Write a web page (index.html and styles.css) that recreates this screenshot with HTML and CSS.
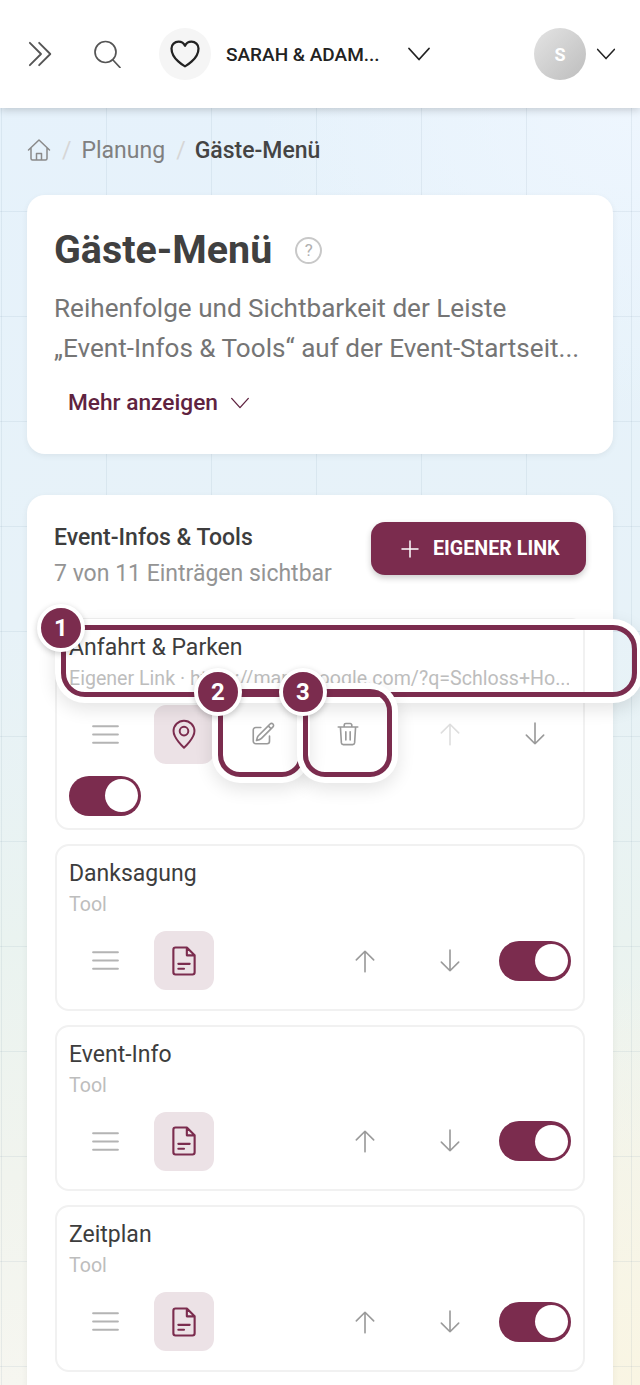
FILE: index.html
```html
<!DOCTYPE html>
<html lang="de">
<head>
  <meta charset="utf-8">
  <title>Gäste-Menü</title>
  <meta name="viewport" content="width=device-width, initial-scale=1">
  <link rel="stylesheet" href="styles.css">
</head>
<body>
  <svg class="sprite" width="0" height="0">
    <symbol id="i-menu" viewBox="0 0 24 24"><path d="M3 6h18M3 12h18M3 18h18"/></symbol>
    <symbol id="i-doc" viewBox="0 0 24 24"><path d="M14 2.5H6A1.500 1.500 0 0 0 4.500 4v16A1.500 1.500 0 0 0 6 21.500h12a1.500 1.500 0 0 0 1.500-1.500V8L14 2.500ZM14 2.500V8h5.500M8 14h8M8 17.500h4"/></symbol>
    <symbol id="i-up" viewBox="0 0 24 24"><path d="M12 22V3M4 11l8-8 8 8"/></symbol>
    <symbol id="i-down" viewBox="0 0 24 24"><path d="M12 2v19M4 13l8 8 8-8"/></symbol>
    <symbol id="i-chevron" viewBox="0 0 24 24"><path d="M2 6.500l10 11 10-11"/></symbol>
  </svg>

  <header class="topbar">
    <svg class="icon nav-toggle" viewBox="0 0 28 28"><path d="M2 2l12 12L2 26M12 2l12 12-12 12"/></svg>
    <svg class="icon nav-search" viewBox="0 0 28 28"><circle cx="12.500" cy="12" r="10.500"/><path d="M20 20l7 7.500"/></svg>
    <span class="event-badge">
      <svg class="icon" viewBox="0 0 24 24"><path d="M21 8.250c0-2.485-2.099-4.500-4.688-4.500-1.935 0-3.597 1.126-4.312 2.733-.715-1.607-2.377-2.733-4.313-2.733C5.100 3.750 3 5.765 3 8.250c0 7.220 9 12 9 12s9-4.780 9-12Z"/></svg>
    </span>
    <span class="event-name">SARAH &amp; ADAM...</span>
    <svg class="icon chevron-event"><use href="#i-chevron"/></svg>
    <span class="avatar">S</span>
    <svg class="icon chevron-user"><use href="#i-chevron"/></svg>
  </header>

  <main class="page">
    <nav class="crumbs">
      <svg class="icon crumb-home" viewBox="0 0 24 24"><path d="M1.500 12 12 2l10.500 10M4 9.500v11A1.500 1.500 0 0 0 5.500 22h13a1.500 1.500 0 0 0 1.500-1.500v-11M9.500 22v-6.500h5V22"/></svg>
      <span class="crumb-sep">/</span>
      <span>Planung</span>
      <span class="crumb-sep">/</span>
      <strong>Gäste-Menü</strong>
    </nav>

    <section class="card intro">
      <div class="intro-head">
        <h1>Gäste-Menü</h1>
        <span class="help">?</span>
      </div>
      <p class="intro-text">Reihenfolge und Sichtbarkeit der Leiste<br>„Event-Infos &amp; Tools“ auf der Event-Startseit...</p>
      <div class="more">
        Mehr anzeigen
        <svg class="icon"><use href="#i-chevron"/></svg>
      </div>
    </section>

    <section class="card tools">
      <div class="tools-head">
        <div>
          <h2>Event-Infos &amp; Tools</h2>
          <p>7 von 11 Einträgen sichtbar</p>
        </div>
        <button class="add-link">
          <svg class="icon" viewBox="0 0 18 18"><path d="M9 1v16M1 9h16"/></svg>
          EIGENER LINK
        </button>
      </div>

      <article class="item">
        <h3>Anfahrt &amp; Parken</h3>
        <p class="item-sub">Eigener Link · https://maps.google.com/?q=Schloss+Ho...</p>
        <div class="controls controls-wrap">
          <span class="handle"><svg class="icon"><use href="#i-menu"/></svg></span>
          <span class="tile">
            <svg class="icon" viewBox="-1 -1 26 26"><path d="M12 22.500S4 15.500 4 9.800a8 8 0 0 1 16 0c0 5.700-8 12.700-8 12.700Z"/><circle cx="12" cy="9.800" r="3.300"/></svg>
          </span>
          <span class="act">
            <svg class="icon" viewBox="0 0 24 24"><path d="m16.862 4.487 1.687-1.688a1.875 1.875 0 1 1 2.652 2.652L10.582 16.070a4.500 4.500 0 0 1-1.897 1.130L6 18l.8-2.685a4.500 4.500 0 0 1 1.130-1.897l8.932-8.931ZM16.862 4.487 19.500 7.125M18 14v4.750A2.250 2.250 0 0 1 15.750 21H5.250A2.250 2.250 0 0 1 3 18.750V8.250A2.250 2.250 0 0 1 5.250 6H10"/></svg>
          </span>
          <span class="act">
            <svg class="icon" viewBox="0 0 24 24"><path d="M3 5.500h18M8.500 5.500V3.800A1.500 1.500 0 0 1 10 2.300h4a1.500 1.500 0 0 1 1.500 1.500v1.700M5 5.500l.9 14.700a1.800 1.800 0 0 0 1.800 1.600h8.600a1.800 1.800 0 0 0 1.800-1.600L19 5.500M10 10v7.500M14 10v7.500"/></svg>
          </span>
          <span class="moves">
            <span class="act act-off"><svg class="icon"><use href="#i-up"/></svg></span>
            <span class="act"><svg class="icon"><use href="#i-down"/></svg></span>
          </span>
          <span class="toggle"></span>
        </div>
        <!-- callouts -->
        <span class="mark mark-row"></span>
        <span class="mark mark-edit"></span>
        <span class="mark mark-trash"></span>
        <span class="pin pin-1">1</span>
        <span class="pin pin-2">2</span>
        <span class="pin pin-3">3</span>
      </article>

      <article class="item">
        <h3>Danksagung</h3>
        <p class="item-sub">Tool</p>
        <div class="controls">
          <span class="handle"><svg class="icon"><use href="#i-menu"/></svg></span>
          <span class="tile"><svg class="icon"><use href="#i-doc"/></svg></span>
          <span class="moves">
            <span class="act"><svg class="icon"><use href="#i-up"/></svg></span>
            <span class="act"><svg class="icon"><use href="#i-down"/></svg></span>
          </span>
          <span class="toggle"></span>
        </div>
      </article>

      <article class="item">
        <h3>Event-Info</h3>
        <p class="item-sub">Tool</p>
        <div class="controls">
          <span class="handle"><svg class="icon"><use href="#i-menu"/></svg></span>
          <span class="tile"><svg class="icon"><use href="#i-doc"/></svg></span>
          <span class="moves">
            <span class="act"><svg class="icon"><use href="#i-up"/></svg></span>
            <span class="act"><svg class="icon"><use href="#i-down"/></svg></span>
          </span>
          <span class="toggle"></span>
        </div>
      </article>

      <article class="item">
        <h3>Zeitplan</h3>
        <p class="item-sub">Tool</p>
        <div class="controls">
          <span class="handle"><svg class="icon"><use href="#i-menu"/></svg></span>
          <span class="tile"><svg class="icon"><use href="#i-doc"/></svg></span>
          <span class="moves">
            <span class="act"><svg class="icon"><use href="#i-up"/></svg></span>
            <span class="act"><svg class="icon"><use href="#i-down"/></svg></span>
          </span>
          <span class="toggle"></span>
        </div>
      </article>
    </section>
  </main>
</body>
</html>
```

FILE: styles.css
```css
*, *:before, *:after {
  box-sizing: border-box;
}
html, body {
  margin: 0;
  padding: 0;
  height: 100%;
  overflow: hidden;
}
body {
  font-family: Roboto, "Liberation Sans", sans-serif;
  color: #3d3d3d;
  background:
    radial-gradient(ellipse 75% 30% at 100% 100%, #f9f5e3, #f9f5e300),
    radial-gradient(ellipse 60% 22% at 100% 8%, #eef6fe, #eef6fe00),
    linear-gradient(180deg, #e6f2fc 0, #e7f2f8 45%, #eaf3f0 68%, #f1f4ee 85%, #f6f6f0 100%);
}
h1, h2, h3, p {
  margin: 0;
}
.sprite {
  position: absolute;
}
.icon {
  display: block;
  fill: none;
  stroke: currentColor;
  stroke-width: 1.5;
  stroke-linecap: round;
  stroke-linejoin: round;
}

/* top bar */
.topbar {
  position: relative;
  z-index: 2;
  display: flex;
  align-items: center;
  height: 108px;
  padding: 0 24px 0 28px;
  background: #fff;
  box-shadow: 0 2px 8px #0000002e;
}
.nav-toggle {
  width: 26px;
  height: 26px;
  color: #555;
  stroke-width: 2;
}
.nav-search {
  width: 28px;
  height: 28px;
  margin-left: 39px;
  color: #555;
  stroke-width: 1.7;
}
.event-badge {
  display: flex;
  align-items: center;
  justify-content: center;
  width: 52px;
  height: 52px;
  margin-left: 38px;
  border-radius: 50%;
  background: #f5f5f5;
  color: #222;
}
.event-badge .icon {
  width: 36px;
  height: 36px;
}
.event-name {
  width: 170px;
  margin-left: 15px;
  font-size: 19px;
  font-weight: 500;
  color: #222;
  white-space: nowrap;
}
.chevron-event {
  width: 24px;
  height: 24px;
  margin-left: 11px;
  color: #222;
  stroke-width: 1.8;
}
.avatar {
  display: flex;
  align-items: center;
  justify-content: center;
  width: 52px;
  height: 52px;
  margin-left: auto;
  border-radius: 50%;
  background: linear-gradient(135deg, #e4e4e4, #bdbdbd);
  color: #fff;
  font-size: 18px;
  font-weight: 700;
}
.chevron-user {
  width: 20px;
  height: 20px;
  margin-left: 10px;
  color: #222;
  stroke-width: 1.8;
}

/* page */
.page {
  height: 1277px;
  overflow: hidden;
  padding: 0 27px;
  background-image:
    linear-gradient(90deg, #7896aa20 1px, transparent 1px),
    linear-gradient(180deg, #7896aa20 1px, transparent 1px);
  background-size: 105px 105px;
  background-position: 1px -2px;
}
.crumbs {
  display: flex;
  align-items: center;
  height: 84px;
  font-size: 23px;
  color: #808080;
}
.crumbs strong {
  margin-left: -1px;
  font-size: 23px;
  font-weight: 500;
  color: #444;
}
.crumb-home {
  width: 24px;
  height: 24px;
  color: #8a8a8a;
}
.crumb-sep {
  margin: 0 10px 0 11px;
  color: #d6d6d6;
}
.card {
  border-radius: 18px;
  background: #fff;
  box-shadow: 0 2px 6px #0000000f;
}
.intro {
  height: 259px;
  margin-top: 3px;
  padding: 29px 28px 28px;
}
.intro-head {
  display: flex;
  align-items: center;
  gap: 23px;
}
h1 {
  margin-left: -1px;
  font-size: 39.400px;
  font-weight: 700;
  line-height: 52px;
  color: #404040;
}
.help {
  display: flex;
  align-items: center;
  justify-content: center;
  width: 27px;
  height: 27px;
  border: 2px solid #c8c8c8;
  border-radius: 50%;
  font-size: 17px;
  color: #b0b0b0;
}
.intro-text {
  margin: 12px 0 0 -1px;
  font-size: 26.100px;
  line-height: 40px;
  color: #757575;
  white-space: nowrap;
}
.more {
  display: flex;
  align-items: center;
  gap: 12px;
  margin: 21px 0 0 13px;
  font-size: 22.700px;
  font-weight: 500;
  color: #5f2340;
}
.more .icon {
  width: 20px;
  height: 20px;
  stroke-width: 1.6;
}
.tools {
  margin-top: 41px;
  padding: 27px 28px 28px;
}
.tools-head {
  display: flex;
  justify-content: space-between;
  align-items: flex-start;
  height: 95.500px;
}
h2 {
  margin: 2px 0 0 -1px;
  font-size: 23px;
  font-weight: 500;
  line-height: 28px;
  color: #3d3d3d;
}
.tools-head p {
  margin: 8px 0 0 -1px;
  font-size: 23px;
  line-height: 28px;
  color: #949494;
}
.add-link {
  display: flex;
  align-items: center;
  gap: 14px;
  width: 215px;
  height: 53px;
  margin-right: -1px;
  padding: 0 0 0 30px;
  border: 0;
  border-radius: 14px;
  background: #7b2c4e;
  box-shadow: 0 3px 6px #00000033;
  color: #fff;
  font: 700 19.700px Roboto, sans-serif;
}
.add-link .icon {
  width: 18px;
  height: 18px;
}
.item {
  position: relative;
  margin-bottom: 14px;
  padding: 14px;
  border: 2px solid #f1f1f1;
  border-radius: 14px;
  background: #fff;
}
h3 {
  margin-left: -2px;
  font-size: 23px;
  font-weight: 400;
  line-height: 28px;
  color: #3d3d3d;
}
.item-sub {
  margin: 4px 0 0 -2px;
  font-size: 19.600px;
  line-height: 26px;
  color: #bdbdbd;
  white-space: nowrap;
  overflow: hidden;
}
.controls {
  display: flex;
  align-items: center;
  margin: 13px -2px 4.500px;
}
.controls-wrap {
  flex-wrap: wrap;
  row-gap: 12px;
  margin-bottom: -1.500px;
}
.handle {
  display: flex;
  justify-content: center;
  width: 72px;
  color: #b4b4b4;
}
.handle .icon {
  width: 33px;
  height: 33px;
}
.tile {
  display: flex;
  align-items: center;
  justify-content: center;
  width: 60px;
  height: 59px;
  margin: 0 6px 0 13px;
  border-radius: 12px;
  background: #ece2e6;
  color: #7b2c4e;
}
.tile .icon {
  width: 34px;
  height: 34px;
}
.act {
  display: flex;
  justify-content: center;
  width: 85px;
  color: #9a9a9a;
}
.act .icon {
  width: 26px;
  height: 26px;
}
.act-off {
  color: #dedede;
}
.moves {
  display: flex;
  margin-left: auto;
  margin-right: 7px;
}
.controls-wrap .moves {
  margin-right: -6px;
}
.toggle {
  position: relative;
  display: block;
  width: 72px;
  height: 40px;
  border-radius: 20px;
  background: #7b2c4e;
}
.toggle:after {
  content: "";
  position: absolute;
  top: 3.500px;
  right: 3.500px;
  width: 33px;
  height: 33px;
  border-radius: 50%;
  background: #fff;
}

/* callouts over the first row */
.mark {
  position: absolute;
  border: 5px solid #7b2c4e;
  box-shadow: 0 0 0 6px #fff, 0 6px 18px 6px #0000001c;
}
.mark-row {
  top: 5.500px;
  left: 4px;
  width: 576px;
  height: 72px;
  border-radius: 24px;
}
.mark-edit {
  top: 69.500px;
  left: 161px;
  width: 86px;
  height: 88px;
  border-radius: 22px;
}
.mark-trash {
  top: 69.500px;
  left: 246px;
  width: 89px;
  height: 88px;
  border-radius: 22px;
}
.pin {
  position: absolute;
  display: flex;
  align-items: center;
  justify-content: center;
  width: 48px;
  height: 48px;
  border: 4px solid #fff;
  border-radius: 50%;
  background: #7b2c4e;
  box-shadow: 0 2px 6px #00000033;
  color: #fff;
  font-size: 24px;
  font-weight: 700;
}
.pin-1 {
  top: -16px;
  left: -20px;
}
.pin-2 {
  top: 48px;
  left: 137px;
}
.pin-3 {
  top: 48px;
  left: 222px;
}
```
